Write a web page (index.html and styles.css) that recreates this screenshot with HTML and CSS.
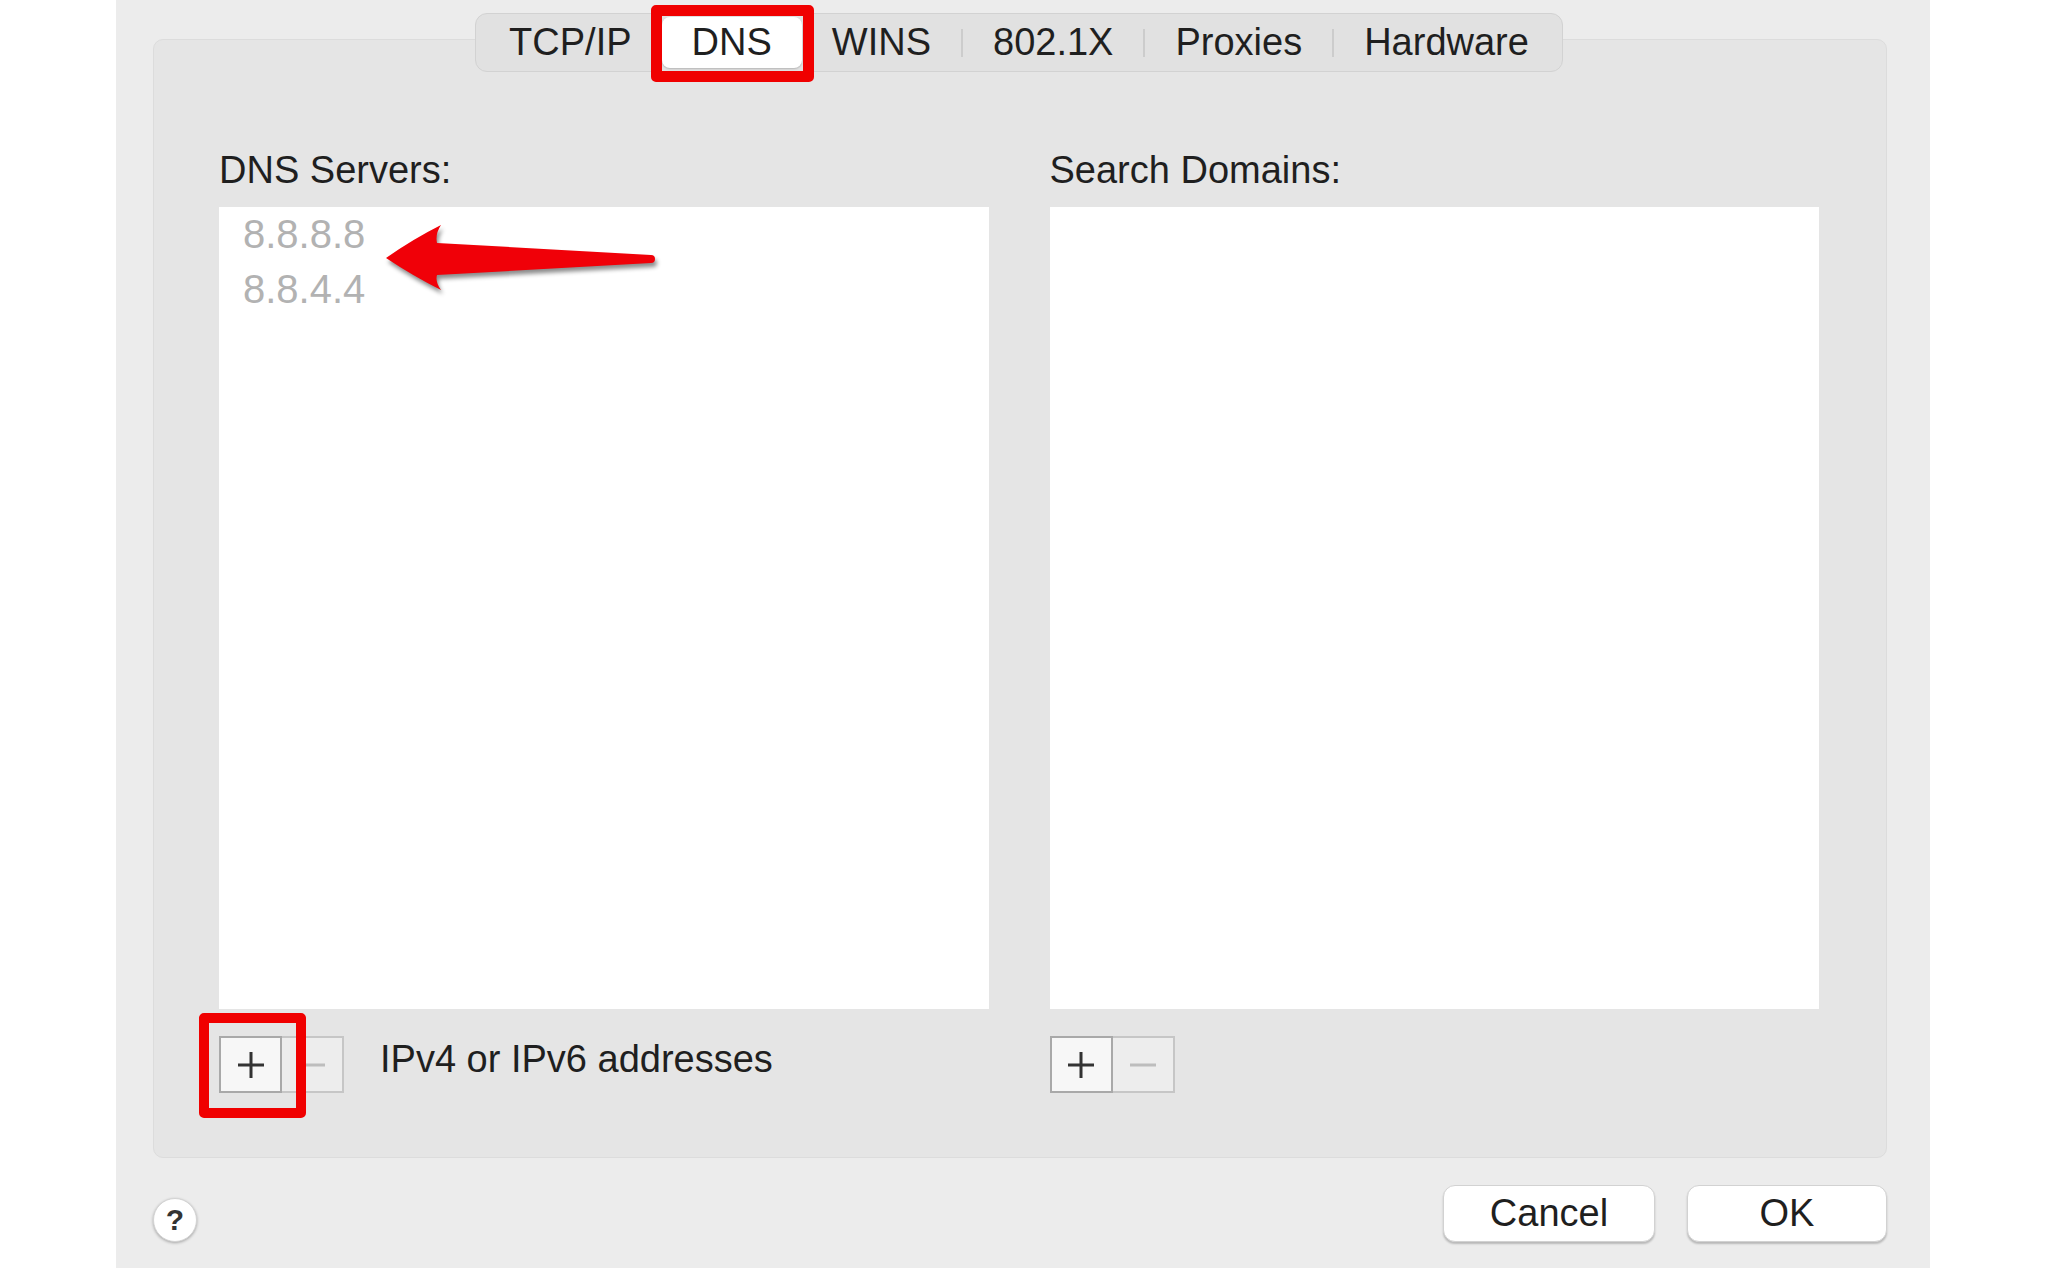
FILE: index.html
```html
<html>
    <head>
        <meta name="viewport" content="width=device-width, initial-scale=1.0">
        <title>Network - DNS</title>
        <link rel="stylesheet" href="styles.css">
    </head>
    <body>
        <div class="window">
            <div class="group">
                <div class="tabs">
                    <div class="tab">TCP/IP</div>
                    <div class="tab selected">DNS<span class="mark mark-tab"></span></div>
                    <div class="tab">WINS</div>
                    <span class="sep"></span>
                    <div class="tab">802.1X</div>
                    <span class="sep"></span>
                    <div class="tab">Proxies</div>
                    <span class="sep"></span>
                    <div class="tab">Hardware</div>
                </div>
                <div class="columns">
                    <div class="column">
                        <div class="label">DNS Servers:</div>
                        <div class="list">
                            <div class="row">8.8.8.8</div>
                            <div class="row">8.8.4.4</div>
                            <svg class="arrow" width="300" height="95" viewBox="0 0 300 95">
                                <path d="M17,46 Q44,27 72,13 Q66,22 68,31 L282,43 A4,4 0 0 1 282,51 L68,63 Q66,70 72,78 Q44,64 17,46 Z" fill="#f00008"/>
                            </svg>
                        </div>
                        <div class="controls">
                            <div class="pm">
                                <button class="add">
                                    <svg width="28" height="28" viewBox="0 0 28 28"><path d="M14 1V27M1 14H27" stroke="#333" stroke-width="3"/></svg>
                                    <span class="mark mark-add"></span>
                                </button>
                                <button class="remove">
                                    <svg width="28" height="28" viewBox="0 0 28 28"><path d="M1 14H27" stroke="#bdbdbd" stroke-width="3"/></svg>
                                </button>
                            </div>
                            <span class="hint">IPv4 or IPv6 addresses</span>
                        </div>
                    </div>
                    <div class="column">
                        <div class="label">Search Domains:</div>
                        <div class="list"></div>
                        <div class="controls">
                            <div class="pm">
                                <button class="add">
                                    <svg width="28" height="28" viewBox="0 0 28 28"><path d="M14 1V27M1 14H27" stroke="#333" stroke-width="3"/></svg>
                                </button>
                                <button class="remove">
                                    <svg width="28" height="28" viewBox="0 0 28 28"><path d="M1 14H27" stroke="#bdbdbd" stroke-width="3"/></svg>
                                </button>
                            </div>
                        </div>
                    </div>
                </div>
            </div>
            <div class="footer">
                <div class="help">?</div>
                <div class="actions">
                    <button class="btn cancel">Cancel</button>
                    <button class="btn ok">OK</button>
                </div>
            </div>
        </div>
    </body>
</html>
```

FILE: styles.css
```css
html, body{
    margin: 0px;
    padding: 0px;
    background-color: white;
    color: #1f1f1f;
    font-family: 'Liberation Sans', Arial, sans-serif;
    overflow: hidden;
}
.window{
    margin-left: 116px;
    width: 1814px;
    height: 1268px;
    box-sizing: border-box;
    padding: 39px 43px 0px 37px;
    background-color: #ececec;
}
.group{
    display: flex;
    flex-direction: column;
    height: 1119px;
    box-sizing: border-box;
    padding: 0px 67px 0px 65px;
    background-color: #e5e5e5;
    border: 1px solid #dcdcdc;
    border-radius: 10px;
}
.tabs{
    align-self: center;
    display: flex;
    align-items: center;
    margin-top: -27px;
    height: 59px;
    box-sizing: border-box;
    padding: 0px 3px;
    background-color: #e1e1e1;
    border: 1px solid #d2d2d2;
    border-radius: 12px;
    font-size: 38px;
}
.tab{
    position: relative;
    height: 51px;
    line-height: 51px;
    padding: 0px 30px;
}
.selected{
    background-color: white;
    border-radius: 8px;
    box-shadow: 0px 1px 2px rgba(0,0,0,0.2);
}
.sep{
    width: 2px;
    height: 28px;
    background-color: #cccccc;
}
.mark{
    position: absolute;
    border: 10px solid #f00000;
    border-radius: 5px;
    pointer-events: none;
    z-index: 5;
}
.mark-tab{
    top: -12px;
    bottom: -14px;
    left: -11px;
    right: -12px;
    border-width: 11px;
}
.mark-add{
    top: -25px;
    bottom: -27px;
    left: -22px;
    right: -26px;
}
.columns{
    display: flex;
    gap: 61px;
    margin-top: 78px;
}
.column{
    flex: 1;
}
.label{
    font-size: 38px;
    line-height: 40px;
}
.list{
    position: relative;
    margin-top: 17px;
    height: 802px;
    background-color: white;
}
.row{
    padding-left: 24px;
    font-size: 40px;
    line-height: 55px;
    color: #b2b2b2;
}
.arrow{
    position: absolute;
    left: 150px;
    top: 5px;
    filter: drop-shadow(2px 4px 2px rgba(0,0,0,0.45));
}
.controls{
    display: flex;
    align-items: center;
    margin-top: 27px;
}
.pm{
    display: flex;
}
.pm button{
    display: flex;
    align-items: center;
    justify-content: center;
    width: 63px;
    height: 57px;
    padding: 0px;
    background-color: #ededed;
    border: 2px solid #c6c6c6;
}
.pm .add{
    position: relative;
    background-color: #f7f7f7;
    border-color: #a9a9a9;
}
.pm .remove{
    width: 62px;
    border-left: none;
}
.hint{
    margin-left: 36px;
    padding-bottom: 10px;
    font-size: 38px;
}
.footer{
    display: flex;
    justify-content: space-between;
    align-items: flex-end;
    margin-top: 27px;
}
.help{
    display: flex;
    align-items: center;
    justify-content: center;
    width: 44px;
    height: 44px;
    box-sizing: border-box;
    border-radius: 50%;
    background-color: white;
    border: 1px solid #d4d4d4;
    box-shadow: 0px 1px 3px rgba(0,0,0,0.3);
    font-size: 30px;
    font-weight: bold;
    color: #333333;
}
.actions{
    display: flex;
    gap: 32px;
}
.btn{
    height: 57px;
    background-color: white;
    border: 1px solid #d2d2d2;
    border-radius: 12px;
    box-shadow: 0px 2px 2px rgba(0,0,0,0.22);
    font-family: 'Liberation Sans', Arial, sans-serif;
    font-size: 38px;
    color: #1f1f1f;
}
.cancel{
    width: 212px;
}
.ok{
    width: 200px;
}
```
